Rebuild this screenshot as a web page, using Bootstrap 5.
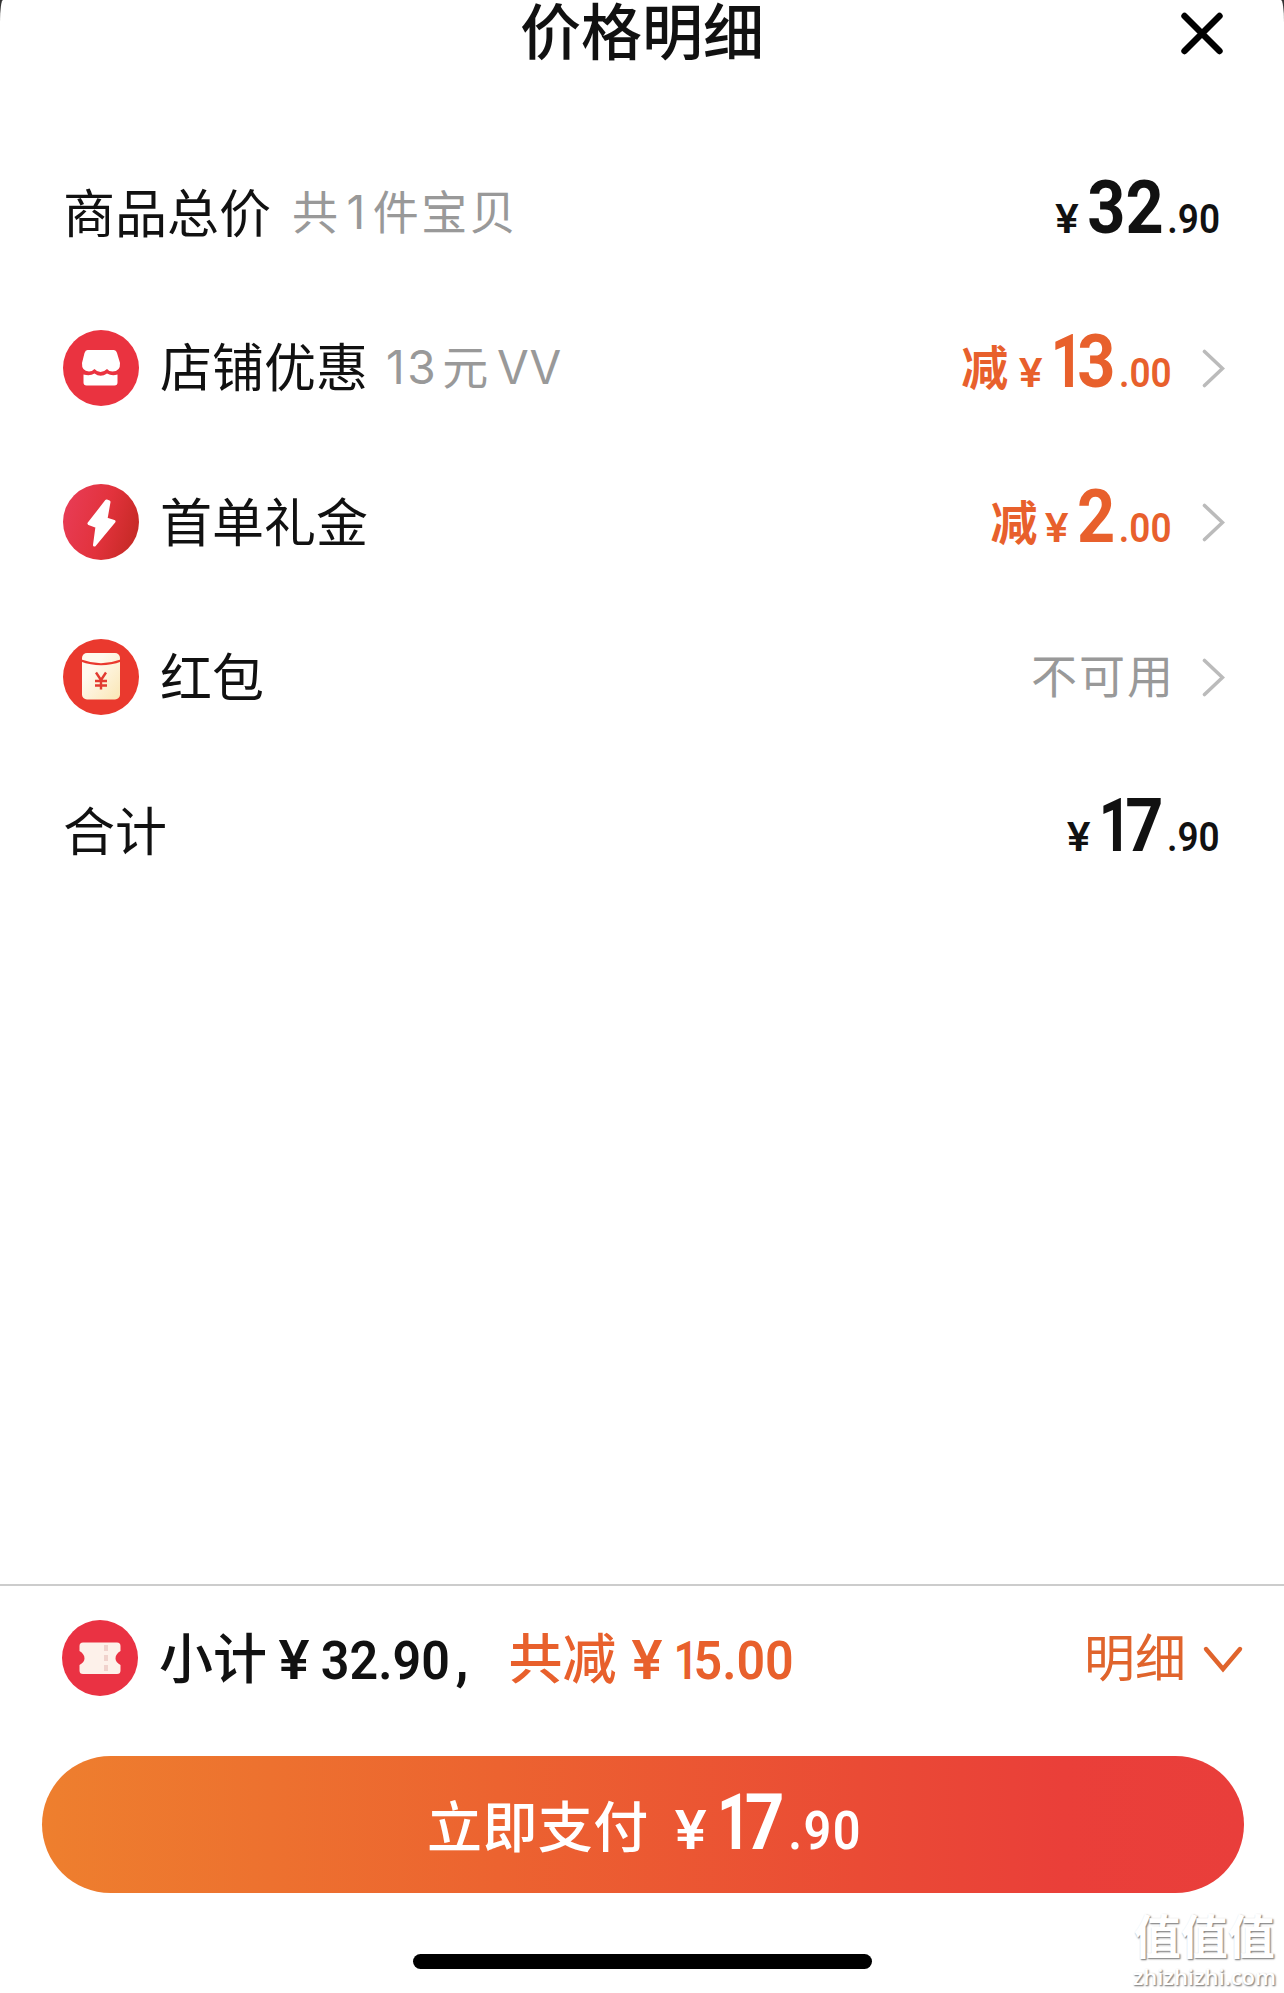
<!DOCTYPE html>
<html lang="zh-CN">
<head>
  <meta charset="UTF-8" />
  <meta name="viewport" content="width=device-width, initial-scale=1.0"/>
  <title>价格明细</title>
  <link href="https://cdn.jsdelivr.net/npm/bootstrap@5.3.0/dist/css/bootstrap.min.css" rel="stylesheet">
  <style>
    body {
      background-color: #333;
      color: #111;
      font-family: "Noto Sans CJK SC", sans-serif;
      line-height: 1;
    }

    .sheet {
      width: 1284px;
      height: 1993px;
      background-color: #fff;
      border-radius: 3px 3px 0 0 / 22px 22px 0 0;
    }

    .sheet-header {
      height: 136px;
    }

    .sheet-title {
      font-size: 61px;
      font-weight: 500;
      line-height: 57px;
    }

    .sheet-close {
      top: 11px;
      right: 59px;
    }

    .price-row {
      height: 154.6px;
      padding: 0 59px 0 63px;
    }

    .price-label {
      font-size: 52px;
      line-height: 68px;
      padding-bottom: 5px;
    }

    .price-note {
      font-family: Inter, "Noto Sans CJK SC", sans-serif;
      font-size: 46px;
      font-weight: 370;
      letter-spacing: 2.5px;
      margin-left: 21px;
      padding-bottom: 2px;
      color: #999;
    }

    .note-count {
      margin: 0 5px 0 6px;
    }

    .note-voucher {
      margin-left: 18px;
      word-spacing: -9px;
    }

    .note-unit {
      margin-left: 4px;
    }

    .note-letters {
      letter-spacing: 0;
    }

    .price-icon {
      width: 76px;
      height: 76px;
      margin-right: 21px;
    }

    /* condensed figures */
    .amount {
      font-family: Roboto, sans-serif;
      font-weight: 700;
      line-height: 76px;
      transform: scaleX(0.9);
      transform-origin: right;
    }

    .amount-yen,
    .amount-dec {
      font-size: 41px;
      font-weight: 650;
    }

    .amount-yen {
      font-family: Inter, sans-serif;
      font-size: 40px;
      font-weight: 600;
      margin-right: 9px;
      transform: scaleX(1.2);
      transform-origin: right;
    }

    .amount-int {
      font-size: 74px;
      margin-right: 4px;
    }

    .digit-one {
      display: inline-block;
      letter-spacing: -0.1em;
      margin-left: -0.08em;
      transform: scaleX(0.85);
      transform-origin: right;
    }

    .row-total {
      margin-right: 5px;
    }

    .amount-off {
      font-size: 47px;
      font-weight: 600;
      margin-right: -2px;
      padding-bottom: 6px;
    }

    .text-off {
      color: #e8602c;
    }

    .text-off-soft {
      color: #e0642c;
    }

    .not-usable {
      font-size: 46px;
      font-weight: 370;
      letter-spacing: 2px;
      margin-right: -3px;
      padding-bottom: 9px;
      color: #999;
    }

    .row-arrow {
      margin-left: 29px;
    }

    .pay-bar {
      height: 409px;
      border-top: 2px solid #ccc;
    }

    .subtotal {
      height: 144px;
      padding: 0 40px 0 62px;
      font-size: 54px;
      font-weight: 500;
    }

    .subtotal-num {
      font-family: Roboto, sans-serif;
      font-weight: 650;
      margin-left: 13px;
      transform: scaleX(0.93);
      transform-origin: left;
    }

    .subtotal-yen {
      display: inline-block;
      font-family: Inter, sans-serif;
      font-size: 53px;
      font-weight: 600;
      margin-right: 14px;
      transform: scaleX(1.15);
    }

    .subtotal-comma {
      font-weight: 800;
      margin-left: 6px;
    }

    .subtotal-off {
      margin-left: 26px;
    }

    .subtotal-off + .subtotal-num {
      margin-left: 16px;
    }

    .detail-link {
      font-size: 51px;
      font-weight: 400;
      padding-bottom: 5px;
    }

    .btn-pay {
      width: 1202px;
      height: 137px;
      margin: 26px 40px 0 42px;
      padding: 0 0 0 385px;
      border: 0;
      color: #fff !important;
      font-size: 55px;
      font-weight: 500;
      letter-spacing: 0.4px;
      background: linear-gradient(90deg, #ee7f2e 0%, #ec6330 38%, #ea4b35 68%, #ea3f39 85%, #e93e3b 100%);
    }

    .btn-pay-text {
      padding-bottom: 3px;
    }

    .btn-pay .amount {
      margin-left: 28px;
      padding-top: 5px;
      transform-origin: left;
    }

    .btn-pay .amount-yen,
    .btn-pay .amount-dec {
      font-size: 54px;
    }

    .btn-pay .amount-yen {
      margin-right: 14px;
      transform-origin: center;
    }

    .btn-pay .amount-int {
      font-size: 77px;
    }

    .btn-pay .amount-dec {
      letter-spacing: 1.5px;
    }

    .home-bar {
      width: 459px;
      height: 15px;
      margin-top: 61px;
      background-color: #000;
    }

    .watermark {
      right: 8px;
      bottom: 4px;
      color: #fff;
      text-shadow: 1px 1px 2px #888, 1px 1px 1px #aaa;
    }

    .watermark-name {
      font-size: 47px;
      font-weight: 700;
      line-height: 59px;
    }

    .watermark-site {
      font-family: "Open Sans", sans-serif;
      font-size: 22px;
      font-weight: 600;
      line-height: 26px;
    }
  </style>
</head>
<body>

<div class="sheet position-relative d-flex flex-column overflow-hidden">

  <div class="sheet-header position-relative text-center">
    <div class="sheet-title">价格明细</div>
    <svg class="sheet-close position-absolute" width="46" height="44" viewBox="0 0 46 44">
      <path d="M5.500 5L40.500 40M40.500 5L5.500 40" stroke="#000" stroke-width="6.400" stroke-linecap="round"/>
    </svg>
  </div>

  <div class="flex-grow-1">
    <div class="price-row d-flex align-items-center">
      <div class="price-label">商品总价</div>
      <div class="price-note">共<span class="note-count">1</span>件宝贝</div>
      <div class="amount d-flex align-items-baseline ms-auto row-total">
        <span class="amount-yen">¥</span><span class="amount-int">32</span><span class="amount-dec">.90</span>
      </div>
    </div>

    <div class="price-row d-flex align-items-center">
      <svg class="price-icon" viewBox="0 0 76 76">
        <circle cx="38" cy="38" r="38" fill="#ea3340"/>
        <path d="M24.500 20H50.500Q53 20 54 23L57 33Q57.500 41.500 49.500 41.500Q46 41.500 44 39Q41 42 37.500 42Q34 42 31.500 39Q29 41.500 26 41.500Q18.500 41 19 33L21.500 23Q22.500 20 24.500 20Z" fill="#fff"/>
        <path d="M20.500 44.500Q27 46.500 31.500 43.500Q37.500 48 44 43.500Q49 46.500 54.500 44.500V52.500Q54.500 55.500 51.500 55.500H23.500Q20.500 55.500 20.500 52.500Z" fill="#fff"/>
      </svg>
      <div class="price-label">店铺优惠</div>
      <div class="price-note note-voucher">13<span class="note-unit">元</span> <span class="note-letters">VV</span></div>
      <div class="amount-off text-off ms-auto">减</div>
      <div class="amount text-off d-flex align-items-baseline">
        <span class="amount-yen">¥</span><span class="amount-int"><span class="digit-one">1</span>3</span><span class="amount-dec">.00</span>
      </div>
      <svg class="row-arrow" width="24" height="40" viewBox="0 0 24 40">
        <path d="M3.500 3.500L21.500 20.500L3.500 37.500" fill="none" stroke="#bbb" stroke-width="3.600" stroke-linecap="round"/>
      </svg>
    </div>

    <div class="price-row d-flex align-items-center">
      <svg class="price-icon" viewBox="0 0 76 76">
        <defs>
          <linearGradient id="gift" x1="0" y1="0.300" x2="1" y2="0.600">
            <stop offset="0" stop-color="#e83c55"/>
            <stop offset="0.550" stop-color="#e2323c"/>
            <stop offset="1" stop-color="#c62a26"/>
          </linearGradient>
        </defs>
        <circle cx="38" cy="38" r="38" fill="url(#gift)"/>
        <path d="M43.500 17L26 39.500L34 42.500L31.500 61L51 37.500L43 35L46 18Z" fill="#fff" stroke="#fff" stroke-width="3" stroke-linejoin="round"/>
      </svg>
      <div class="price-label">首单礼金</div>
      <div class="amount-off text-off ms-auto">减</div>
      <div class="amount text-off d-flex align-items-baseline">
        <span class="amount-yen">¥</span><span class="amount-int">2</span><span class="amount-dec">.00</span>
      </div>
      <svg class="row-arrow" width="24" height="40" viewBox="0 0 24 40">
        <path d="M3.500 3.500L21.500 20.500L3.500 37.500" fill="none" stroke="#bbb" stroke-width="3.600" stroke-linecap="round"/>
      </svg>
    </div>

    <div class="price-row d-flex align-items-center">
      <svg class="price-icon" viewBox="0 0 76 76">
        <defs>
          <linearGradient id="packet" x1="0" y1="0" x2="1" y2="1">
            <stop offset="0.300" stop-color="#fff9ee"/>
            <stop offset="1" stop-color="#fae6b4"/>
          </linearGradient>
        </defs>
        <circle cx="38" cy="38" r="38" fill="#ea392e"/>
        <rect x="19" y="14" width="38" height="46.500" rx="5" fill="url(#packet)"/>
        <path d="M18 21.500Q38 29 58 21.500" fill="none" stroke="#ea392e" stroke-width="2.200"/>
        <path d="M33 33.500L38 41L43 33.500M38 41V50.500M32 42H44M32 46.500H44" fill="none" stroke="#e23a30" stroke-width="2.400"/>
      </svg>
      <div class="price-label">红包</div>
      <div class="not-usable ms-auto">不可用</div>
      <svg class="row-arrow" width="24" height="40" viewBox="0 0 24 40">
        <path d="M3.500 3.500L21.500 20.500L3.500 37.500" fill="none" stroke="#bbb" stroke-width="3.600" stroke-linecap="round"/>
      </svg>
    </div>

    <div class="price-row d-flex align-items-center">
      <div class="price-label">合计</div>
      <div class="amount d-flex align-items-baseline ms-auto row-total">
        <span class="amount-yen">¥</span><span class="amount-int"><span class="digit-one">1</span>7</span><span class="amount-dec">.90</span>
      </div>
    </div>
  </div>

  <div class="pay-bar">
    <div class="subtotal d-flex align-items-center">
      <svg class="price-icon" viewBox="0 0 76 76">
        <circle cx="38" cy="38" r="38" fill="#ea3243"/>
        <path d="M21 22.500H55Q58.500 22.500 58.500 26V31Q53.500 34 53.500 38.500Q53.500 42 58.500 45V50.500Q58.500 54 55 54H21Q17.500 54 17.500 50.500V45Q22.500 42 22.500 38.500Q22.500 34 17.500 31V26Q17.500 22.500 21 22.500Z" fill="#fdf1ea"/>
        <path d="M44 25V52" stroke="#f0d2cc" stroke-width="4" stroke-dasharray="6 4"/>
      </svg>
      <div class="d-flex align-items-baseline">
        <span>小计</span>
        <span class="subtotal-num"><span class="subtotal-yen">¥</span>32.90<span class="subtotal-comma">,</span></span>
        <span class="subtotal-off text-off">共减</span>
        <span class="subtotal-num text-off"><span class="subtotal-yen">¥</span><span class="digit-one">1</span>5.00</span>
      </div>
      <div class="detail-link text-off-soft ms-auto">明细</div>
      <svg class="ms-3" width="42" height="30" viewBox="0 0 42 30">
        <path d="M4 6L21 26L38 6" fill="none" stroke="#e0642c" stroke-width="4.400" stroke-linecap="round"/>
      </svg>
    </div>

    <button type="button" class="btn btn-pay rounded-pill d-flex align-items-center">
      <span class="btn-pay-text">立即支付</span>
      <span class="amount d-flex align-items-baseline">
        <span class="amount-yen">¥</span><span class="amount-int"><span class="digit-one">1</span>7</span><span class="amount-dec">.90</span>
      </span>
    </button>

    <div class="home-bar rounded-pill mx-auto"></div>
  </div>

  <div class="watermark position-absolute text-center">
    <div class="watermark-name">值值值</div>
    <div class="watermark-site">zhizhizhi.com</div>
  </div>
</div>

<script src="https://cdn.jsdelivr.net/npm/bootstrap@5.3.0/dist/js/bootstrap.bundle.min.js"></script>
</body>
</html>
